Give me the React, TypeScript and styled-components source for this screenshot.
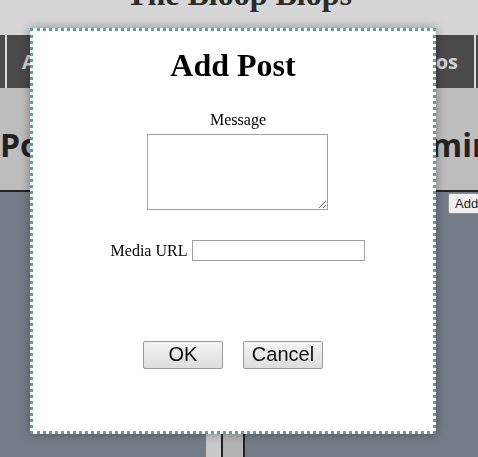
import React from "react";
import styled, { createGlobalStyle } from "styled-components";

const Global = createGlobalStyle`
  html, body { margin: 0; padding: 0; }
  body {
    width: 478px;
    height: 457px;
    overflow: hidden;
    background: #747c88;
    font-family: "Liberation Serif", serif;
  }
`;

const Page = styled.div`
  display: flex;
  flex-direction: column;
  min-height: 457px;
`;

const Header = styled.header`
  height: 35px;
  background: #d6d6d6;
  overflow: hidden;
`;

const SiteTitle = styled.h1`
  margin: -24px 0 0;
  text-align: center;
  font: bold 32px "Liberation Serif", serif;
  color: #2b2b2b;
`;

const Nav = styled.nav`
  height: 53px;
  background: #4a4a4a;
  display: flex;
  padding: 0 2px 0 5px;
`;

const NavItem = styled.a<{ $last?: boolean; $align?: string }>`
  flex: 1;
  display: flex;
  align-items: center;
  justify-content: ${(p) => p.$align || "center"};
  padding: 0 16px 0 15px;
  border-left: 2px solid #d9d9d9;
  ${(p) => (p.$last ? "border-right: 2px solid #d9d9d9;" : "")}
  font: bold 20px "Open Sans", sans-serif;
  color: #d2d2d2;
  white-space: nowrap;
`;

const Band = styled.section`
  height: 102px;
  background: #bdbdbd;
  border-bottom: 2px solid #222;
  display: grid;
  grid-template-columns: 350px 1fr;
  overflow: hidden;
`;

const BandHeading = styled.h2`
  margin: 0;
  padding-top: 35px;
  font: bold 32px "Open Sans", sans-serif;
  color: #222;
  white-space: nowrap;
`;

const Content = styled.main`
  flex: 1;
  display: grid;
  grid-template-columns: 206px 15px 2px 20px 2px 1fr;
`;

const Column = styled.div<{ $color: string }>`
  background: ${(p) => p.$color};
`;

const ActionCell = styled.div`
  padding: 1px 0 0 203px;
  white-space: nowrap;
`;

const SmallButton = styled.button`
  font: 13px "Liberation Sans", sans-serif;
  padding: 2px 6px;
  background: #efefef;
  border: 1px solid #8f8f8f;
  border-radius: 2px;
  color: #222;
`;

const Modal = styled.div`
  position: fixed;
  left: 30px;
  top: 28px;
  width: 400px;
  height: 400px;
  background: #fff;
  border: 3px dotted #5f9ea0;
  box-shadow: 0 0 10px rgba(0, 0, 0, 0.35);
  display: flex;
  flex-direction: column;
  align-items: center;
`;

const ModalTitle = styled.h1`
  margin: 16px 0 0;
  font: bold 32px "Liberation Serif", serif;
  color: #000;
`;

const Form = styled.form`
  display: flex;
  flex-direction: column;
  align-items: center;
  padding-left: 10px;
`;

const Label = styled.label`
  margin-top: 27px;
  font: 16px "Liberation Serif", serif;
  color: #000;
`;

const TextArea = styled.textarea`
  margin: 5px 0 0 -1px;
  width: 181px;
  height: 76px;
  box-sizing: border-box;
  border: 1px solid #a0a0a0;
  padding: 2px;
  font: 13px "Liberation Mono", monospace;
`;

const Row = styled.div`
  margin-top: 30px;
  display: flex;
  align-items: center;
  gap: 5px;
  font: 16px "Liberation Serif", serif;
`;

const TextInput = styled.input`
  width: 173px;
  height: 21px;
  box-sizing: border-box;
  border: 1px solid #a0a0a0;
  padding: 1px 2px;
`;

const Buttons = styled.div`
  margin-top: 80px;
  display: flex;
  gap: 20px;
`;

const DialogButton = styled.button`
  width: 80px;
  height: 28px;
  box-sizing: border-box;
  padding: 0 0 1px;
  font: 20px "Liberation Sans", sans-serif;
  color: #111;
  background: linear-gradient(#f4f4f4, #dddddd);
  border: 1px solid #9a9a9a;
  border-radius: 2px;
`;

export default function App() {
  return (
    <>
      <Global />
      <Page>
        <Header>
          <SiteTitle>The Bloop Blops</SiteTitle>
        </Header>
        <Nav>
          <NavItem $align="flex-start">About</NavItem>
          <NavItem>Posts</NavItem>
          <NavItem>Events</NavItem>
          <NavItem $last $align="flex-end">Photos</NavItem>
        </Nav>
        <Band>
          <BandHeading>Posts</BandHeading>
          <BandHeading>Upcoming</BandHeading>
        </Band>
        <Content>
          <div />
          <Column $color="#c9c9c9" />
          <Column $color="#222" />
          <Column $color="#b3b3b3" />
          <Column $color="#222" />
          <ActionCell>
            <SmallButton>Add Event</SmallButton>
          </ActionCell>
        </Content>
      </Page>
      <Modal>
        <ModalTitle>Add Post</ModalTitle>
        <Form>
          <Label>Message</Label>
          <TextArea />
          <Row>
            <span>Media URL</span>
            <TextInput type="text" />
          </Row>
        </Form>
        <Buttons>
          <DialogButton type="button">OK</DialogButton>
          <DialogButton type="button">Cancel</DialogButton>
        </Buttons>
      </Modal>
    </>
  );
}
